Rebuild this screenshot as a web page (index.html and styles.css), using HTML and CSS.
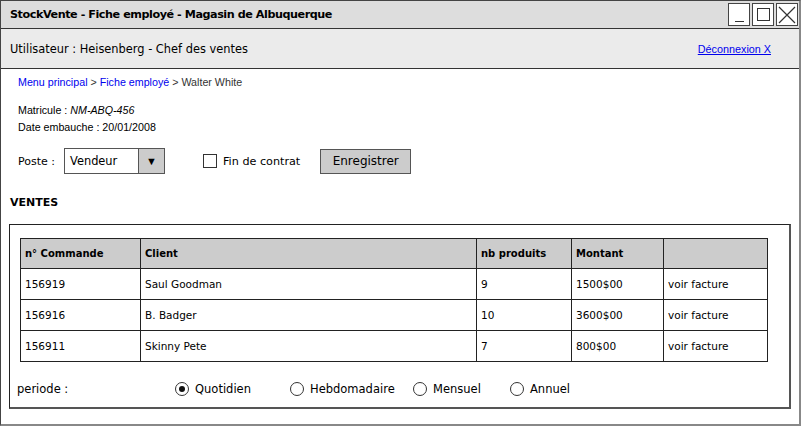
FILE: index.html
```html
<!DOCTYPE html>
<html lang="fr">
<head>
    <meta charset="UTF-8">
    <title>StockVente - Fiche employé</title>
    <link rel="stylesheet" href="styles.css">
</head>
<body>
    <div class="window">
        <div class="titlebar">
            <span class="title">StockVente - Fiche employé - Magasin de Albuquerque</span>
            <div class="controls">
                <span class="ctl"><span class="ctl-min"></span></span>
                <span class="ctl"><span class="ctl-max"></span></span>
                <span class="ctl">
                    <svg width="20" height="20" viewBox="0 0 20 20"><path d="M2 2 L18 18 M18 2 L2 18" stroke="#333" stroke-width="1.2" fill="none"/></svg>
                </span>
            </div>
        </div>

        <div class="userbar">
            <span class="user">Utilisateur : Heisenberg - Chef des ventes</span>
            <a href="#" class="logout">Déconnexion X</a>
        </div>

        <div class="content">
            <div class="crumbs">
                <a href="#">Menu principal</a> &gt; <a href="#">Fiche employé</a> &gt; Walter White
            </div>

            <div class="info">
                <div>Matricule : <i>NM-ABQ-456</i></div>
                <div>Date embauche : 20/01/2008</div>
            </div>

            <div class="form-row">
                <span class="lbl">Poste :</span>
                <div class="select">
                    <span class="select-value">Vendeur</span>
                    <span class="select-arrow">&#9660;</span>
                </div>
                <label class="check"><span class="box"></span>Fin de contrat</label>
                <button class="save">Enregistrer</button>
            </div>

            <h3 class="section">VENTES</h3>

            <div class="frame">
                <table class="sales">
                    <thead>
                        <tr>
                            <th class="c1">n° Commande</th>
                            <th class="c2">Client</th>
                            <th class="c3">nb produits</th>
                            <th class="c4">Montant</th>
                            <th class="c5"></th>
                        </tr>
                    </thead>
                    <tbody>
                        <tr><td>156919</td><td>Saul Goodman</td><td>9</td><td>1500$00</td><td>voir facture</td></tr>
                        <tr><td>156916</td><td>B. Badger</td><td>10</td><td>3600$00</td><td>voir facture</td></tr>
                        <tr><td>156911</td><td>Skinny Pete</td><td>7</td><td>800$00</td><td>voir facture</td></tr>
                    </tbody>
                </table>

                <div class="period">
                    <span class="period-lbl">periode :</span>
                    <label class="radio r1"><span class="dot on"></span>Quotidien</label>
                    <label class="radio r2"><span class="dot"></span>Hebdomadaire</label>
                    <label class="radio r3"><span class="dot"></span>Mensuel</label>
                    <label class="radio r4"><span class="dot"></span>Annuel</label>
                </div>
            </div>
        </div>
    </div>
</body>
</html>
```

FILE: styles.css
```css
body {
    margin: 0;
    font-family: "Liberation Sans", Arial, sans-serif;
    color: #000;
    background: #fff;
}

.window {
    width: 801px;
    height: 426px;
    box-sizing: border-box;
    border: 1px solid #444;
    border-right: 2px solid #888;
    border-bottom: 2px solid #888;
    background: #fff;
}

/* sketch text */
.title, .user, .lbl, .select-value, .check, .save, .section, .sales, .period {
    font-family: "DejaVu Sans", sans-serif;
}

.titlebar {
    height: 27px;
    background: #dddddd;
    border-bottom: 1px solid #333;
    display: flex;
    align-items: center;
    justify-content: space-between;
    padding-left: 9px;
}

.title {
    font-weight: bold;
    font-size: 11.2px;
    letter-spacing: -0.45px;
}

.controls {
    display: flex;
    gap: 2px;
    padding-right: 1px;
}

.ctl {
    width: 20px;
    height: 21px;
    border: 1px solid #444;
    background: #fff;
    display: flex;
    align-items: center;
    justify-content: center;
}

.ctl-min {
    width: 9px;
    height: 1px;
    background: #333;
    margin-top: 13px;
}

.ctl-max {
    width: 11px;
    height: 11px;
    border: 1px solid #333;
}

.userbar {
    height: 39px;
    background: #ebebeb;
    border-bottom: 1px solid #333;
    display: flex;
    align-items: center;
    justify-content: space-between;
    padding: 0 28px 0 9px;
}

.user {
    font-size: 11.4px;
}

.logout {
    color: #0000ee;
    font-size: 10.8px;
}

.content {
    padding: 7px 0 0 0;
}

.crumbs {
    font-size: 10.7px;
    padding-left: 17px;
    color: #333;
}

.crumbs a {
    color: #0000ee;
    text-decoration: none;
}

.info {
    font-size: 10.7px;
    padding-left: 17px;
    margin-top: 14px;
    line-height: 17px;
}

.form-row {
    display: flex;
    align-items: center;
    margin-top: 12px;
    padding-left: 17px;
    height: 26px;
}

.lbl {
    font-size: 11px;
    width: 46px;
}

.select {
    width: 99px;
    height: 24px;
    border: 1px solid #555;
    display: flex;
}

.select-value {
    flex: 1;
    font-size: 11.4px;
    padding-left: 5px;
    line-height: 24px;
}

.select-arrow {
    width: 25px;
    background: #cccccc;
    border-left: 1px solid #555;
    font-size: 11px;
    text-align: center;
    line-height: 24px;
}

.check {
    display: flex;
    align-items: center;
    font-size: 11.2px;
    margin-left: 38px;
}

.box {
    width: 12px;
    height: 12px;
    border: 1px solid #333;
    margin-right: 6px;
}

.save {
    margin-left: 20px;
    width: 91px;
    height: 25px;
    background: #cccccc;
    border: 1px solid #555;
    font-size: 12px;
    padding: 0;
}

.section {
    font-size: 11px;
    font-weight: bold;
    margin: 22px 0 0 9px;
}

.frame {
    margin: 15px 0 0 8px;
    width: 782px;
    height: 185px;
    box-sizing: border-box;
    border: 1px solid #222;
    border-right: 2px solid #555;
    border-bottom: 2px solid #555;
    padding: 13px 0 0 10px;
}

.sales {
    border-collapse: collapse;
    table-layout: fixed;
    width: 748px;
    font-size: 10.5px;
}

.sales th, .sales td {
    border: 1px solid #222;
    text-align: left;
    padding: 0 4px;
    height: 31px;
    box-sizing: border-box;
}

.sales th {
    background: #cccccc;
    font-weight: bold;
    font-size: 10px;
    height: 30px;
}

.c1 { width: 120px; }
.c2 { width: 336px; }
.c3 { width: 95px; }
.c4 { width: 92px; }

.period {
    display: flex;
    align-items: center;
    font-size: 11.5px;
    height: 53px;
}

.period-lbl {
    width: 158px;
    margin-left: -3px;
}

.radio {
    display: flex;
    align-items: center;
}

.r1 { width: 115px; }
.r2 { width: 123px; }
.r3 { width: 97px; }

.dot {
    width: 12px;
    height: 12px;
    border: 1px solid #333;
    border-radius: 50%;
    margin-right: 6px;
    position: relative;
}

.dot.on::after {
    content: "";
    position: absolute;
    left: 3px;
    top: 3px;
    width: 6px;
    height: 6px;
    border-radius: 50%;
    background: #111;
}
```
